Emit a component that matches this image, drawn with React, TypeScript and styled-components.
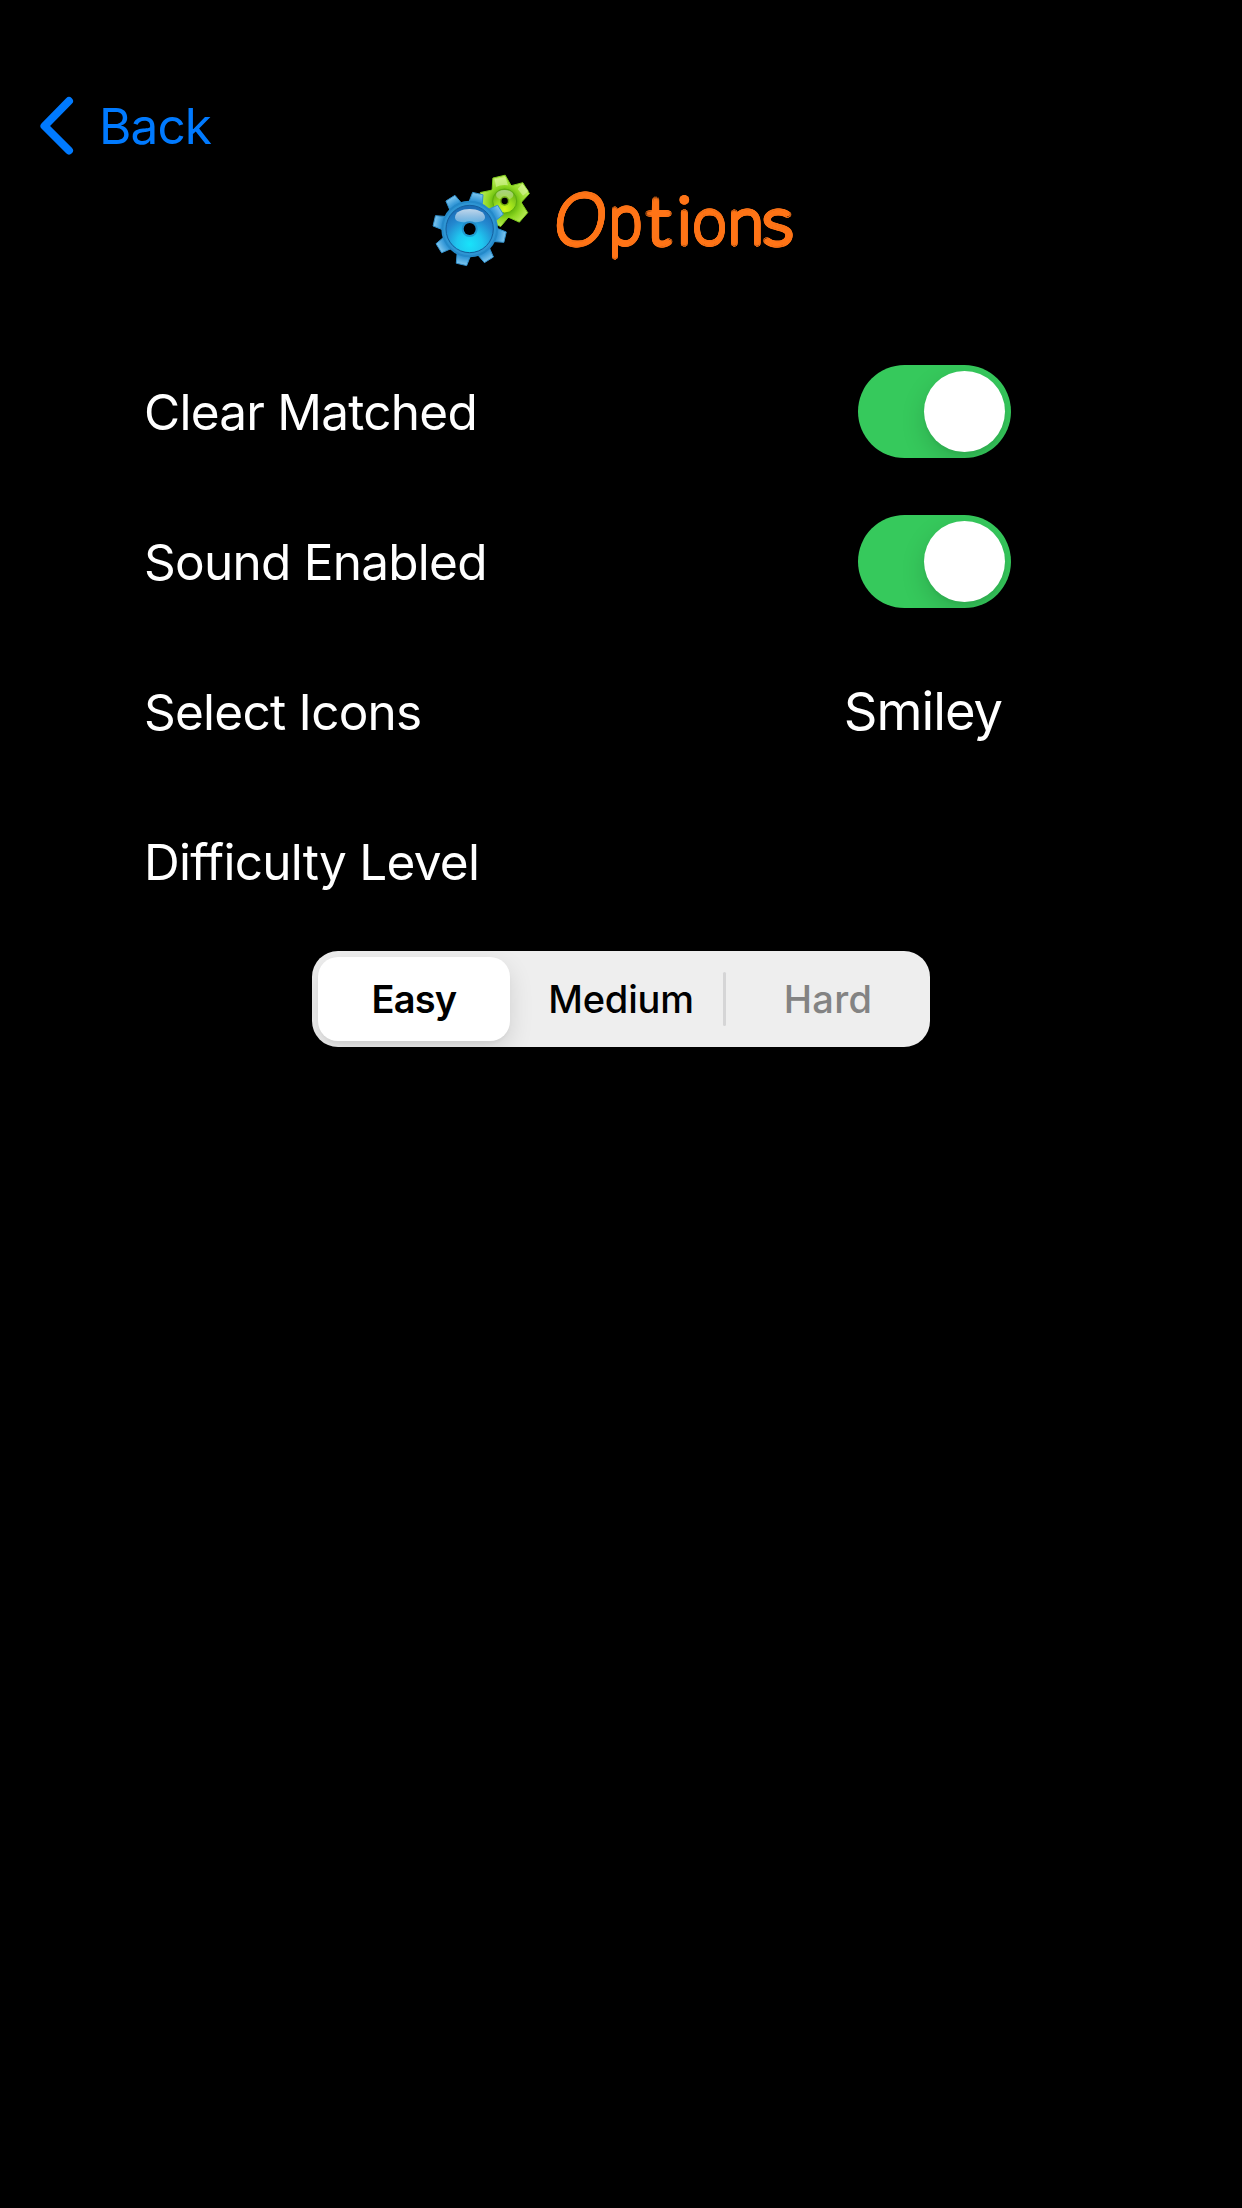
import React, { useState } from "react";
import styled, { createGlobalStyle } from "styled-components";

const GlobalStyle = createGlobalStyle`
  * { box-sizing: border-box; }
  body { margin: 0; background: #000; }
  button { border: 0; padding: 0; margin: 0; background: none; font: inherit; color: inherit; }
`;

const Screen = styled.main`
  display: flex;
  flex-direction: column;
  width: 100%;
  min-height: 2208px;
  padding-top: 81px;
  background: #000;
  color: #fff;
  font-family: Inter, "Liberation Sans", sans-serif;
`;

const NavBar = styled.nav`
  display: flex;
  height: 90px;
  padding-left: 38px;
`;

const BackButton = styled.button`
  display: flex;
  align-items: center;
  gap: 20px;
  color: #007aff;
  font-size: 49.5px;
  letter-spacing: -0.9px;
`;

const Header = styled.header`
  display: flex;
  align-items: flex-start;
  height: 166px;
  padding-left: 420px;
`;

const GearsIcon = styled.svg`
  flex: none;
  width: 120px;
  height: 110px;
  margin-top: -6px;
`;

/* Thickens a hairline face evenly, leaving round stroke ends. */
const roundPen = (radius: number, color: string) =>
  Array.from({ length: 20 }, (_, i) => {
    const a = (i * Math.PI) / 10;
    return `${(radius * Math.cos(a)).toFixed(2)}px ${(radius * Math.sin(a)).toFixed(2)}px 0 ${color}`;
  }).join(", ");

const Title = styled.h1`
  display: flex;
  margin: -4px 0 0 12px;
  color: #ff7518;
  font-family: Lato, sans-serif;
  font-size: 70px;
  font-weight: 100;
  line-height: 100px;
  text-shadow: ${roundPen(3, "#ff7518")}, ${roundPen(1.5, "#ff7518")};
`;

const Letter = styled.span<{ $width: number; $slant?: number; $stretch?: number; $rise?: number }>`
  width: ${(p) => p.$width}px;
  transform-origin: 0 76%;
  transform: skewX(${(p) => -(p.$slant ?? 0)}deg) scale(${(p) => p.$stretch ?? 1}, ${(p) => p.$rise ?? 1});
`;

const Settings = styled.section`
  display: flex;
  flex-direction: column;
  padding: 0 231px 0 144px;
`;

const Row = styled.div`
  display: flex;
  align-items: center;
  justify-content: space-between;
  height: 150px;
`;

const Label = styled.span`
  font-size: 49.5px;
  letter-spacing: -0.75px;
  white-space: nowrap;
`;

const Value = styled.button`
  padding: 0 9px 2px 0;
  font-size: 52.5px;
  letter-spacing: -1px;
`;

const Toggle = styled.button<{ $on: boolean }>`
  display: flex;
  justify-content: ${(p) => (p.$on ? "flex-end" : "flex-start")};
  width: 153px;
  height: 93px;
  padding: 6px;
  margin-bottom: 1px;
  border-radius: 47px;
  overflow: hidden;
  background: ${(p) => (p.$on ? "#36c95c" : "#39393d")};
`;

const Knob = styled.span`
  width: 81px;
  height: 81px;
  border-radius: 50%;
  background: #fff;
  box-shadow: 0 9px 24px rgba(0, 0, 0, 0.15), 0 3px 3px rgba(0, 0, 0, 0.04);
`;

const Segments = styled.div`
  display: flex;
  align-items: center;
  align-self: center;
  width: 618px;
  height: 96px;
  margin-top: 14px;
  padding: 6px;
  border-radius: 26px;
  overflow: hidden;
  background: #eee;
`;

const Segment = styled.button<{ $selected?: boolean; $disabled?: boolean; $tracking?: number }>`
  flex: 1;
  height: 84px;
  border-radius: 20px;
  font-size: 38px;
  font-weight: ${(p) => (p.$selected ? 600 : p.$disabled ? 450 : 500)};
  letter-spacing: ${(p) => p.$tracking ?? 0}px;
  color: ${(p) => (p.$disabled ? "#838383" : "#000")};
  background: ${(p) => (p.$selected ? "#fff" : "transparent")};
  box-shadow: ${(p) =>
    p.$selected ? "0 9px 24px rgba(0,0,0,0.12), 0 3px 3px rgba(0,0,0,0.03)" : "none"};
`;

const Divider = styled.span<{ $visible: boolean }>`
  width: 3px;
  height: 54px;
  margin: 0 6px;
  border-radius: 2px;
  background: ${(p) => (p.$visible ? "#d5d5d6" : "transparent")};
`;

function gearTeeth(cx: number, cy: number, inner: number, outer: number, base: number, tip: number, start: number, count: number) {
  const point = (radius: number, half: number, deg: number) => {
    const a = (deg * Math.PI) / 180;
    return `${(cx + radius * Math.cos(a) - half * Math.sin(a)).toFixed(1)} ${(cy + radius * Math.sin(a) + half * Math.cos(a)).toFixed(1)}`;
  };
  return Array.from({ length: count }, (_, i) => {
    const deg = start + (i * 360) / count;
    return `M${point(inner, -base, deg)}L${point(outer, -tip, deg)}L${point(outer, tip, deg)}L${point(inner, base, deg)}Z`;
  }).join("");
}

function Gears() {
  return (
    <GearsIcon viewBox="0 0 360 330" aria-hidden="true">
      <defs>
        <radialGradient id="greenBody" gradientUnits="userSpaceOnUse" cx="254" cy="112" r="84">
          <stop offset="0.4" stopColor="#68b90d" />
          <stop offset="0.6" stopColor="#8fd823" />
          <stop offset="1" stopColor="#c9f26c" />
        </radialGradient>
        <radialGradient id="greenDisc" cx="0.5" cy="0.85" r="0.8">
          <stop offset="0" stopColor="#d2fa1c" />
          <stop offset="0.5" stopColor="#98dc1c" />
          <stop offset="1" stopColor="#62ac14" />
        </radialGradient>
        <radialGradient id="blueBody" gradientUnits="userSpaceOnUse" cx="149" cy="192" r="114">
          <stop offset="0.68" stopColor="#2186c9" />
          <stop offset="0.78" stopColor="#3a9cda" />
          <stop offset="1" stopColor="#8fd0f4" />
        </radialGradient>
        <radialGradient id="blueDisc" cx="0.5" cy="0.82" r="0.78">
          <stop offset="0" stopColor="#18e3fa" />
          <stop offset="0.35" stopColor="#1fc6ef" />
          <stop offset="0.7" stopColor="#2389d0" />
          <stop offset="1" stopColor="#1b6db8" />
        </radialGradient>
        <linearGradient id="gloss" x1="0" y1="0" x2="0" y2="1">
          <stop offset="0" stopColor="#fff" stopOpacity="0.72" />
          <stop offset="1" stopColor="#fff" stopOpacity="0.3" />
        </linearGradient>
      </defs>
      <g strokeLinejoin="round">
        <path d={gearTeeth(254, 108, 38, 75, 30, 19, 257, 5)} fill="url(#greenBody)" stroke="#7ecb1c" strokeWidth="3" />
        <circle cx="254" cy="108" r="51" fill="url(#greenBody)" />
        <path d="M224 42L256 37L264 61Q244 58 228 66ZM307 57L326 77L309 92L293 72Z" fill="#e2f9ac" opacity="0.55" />
        <circle cx="254" cy="108" r="36" fill="url(#greenDisc)" stroke="#5dac0d" strokeWidth="3" />
        <ellipse cx="254" cy="90" rx="26" ry="15" fill="url(#gloss)" opacity="0.65" />
        <circle cx="254" cy="108" r="14" fill="#619d08" opacity="0.8" />
        <circle cx="254" cy="108" r="9.5" fill="#000" />
      </g>
      <g strokeLinejoin="round">
        <path d={gearTeeth(149, 192, 74, 109, 21, 16, 13, 8)} fill="url(#blueBody)" stroke="#3190cc" strokeWidth="3" />
        <circle cx="149" cy="192" r="85" fill="#2489c9" />
        <circle cx="149" cy="192" r="79" fill="#2e95d3" />
        <circle cx="149" cy="192" r="71" fill="url(#blueDisc)" stroke="#145f9d" strokeWidth="3" />
        <path d="M105 157C105 141 126 132 149 132S195 141 195 157C195 171 177 172 149 172S105 171 105 157Z" fill="url(#gloss)" />
        <circle cx="149" cy="192" r="24" fill="#1e7fbd" opacity="0.6" />
        <circle cx="149" cy="192" r="18" fill="#000" />
      </g>
    </GearsIcon>
  );
}

export default function App() {
  const [clearMatched, setClearMatched] = useState(true);
  const [soundEnabled, setSoundEnabled] = useState(true);

  return (
    <Screen>
      <GlobalStyle />
      <NavBar>
        <BackButton>
          <svg width="41" height="62" viewBox="0 0 41 62" fill="none" aria-hidden="true">
            <path d="M31 6L6.5 31L31 55.5" stroke="currentColor" strokeWidth="8" strokeLinecap="round" strokeLinejoin="round" />
          </svg>
          Back
        </BackButton>
      </NavBar>
      <Header>
        <Gears />
        <Title>
          <Letter $width={57} $slant={9} $stretch={0.92}>O</Letter>
          <Letter $width={37} $stretch={0.86} $rise={1.02}>p</Letter>
          <Letter $width={31} $stretch={1.08} $rise={0.93}>t</Letter>
          <Letter $width={16} $rise={0.93}>i</Letter>
          <Letter $width={35} $stretch={0.86} $rise={0.93}>o</Letter>
          <Letter $width={34} $stretch={0.93} $rise={0.93}>n</Letter>
          <Letter $width={32} $stretch={1.08} $rise={0.93}>s</Letter>
        </Title>
      </Header>
      <Settings>
        <Row>
          <Label>Clear Matched</Label>
          <Toggle $on={clearMatched} onClick={() => setClearMatched(!clearMatched)} aria-label="Clear Matched"><Knob /></Toggle>
        </Row>
        <Row>
          <Label>Sound Enabled</Label>
          <Toggle $on={soundEnabled} onClick={() => setSoundEnabled(!soundEnabled)} aria-label="Sound Enabled"><Knob /></Toggle>
        </Row>
        <Row>
          <Label>Select Icons</Label>
          <Value>Smiley</Value>
        </Row>
        <Row>
          <Label>Difficulty Level</Label>
        </Row>
      </Settings>
      <Segments>
        <Segment $selected $tracking={-0.8}>Easy</Segment>
        <Divider $visible={false} />
        <Segment $tracking={-0.2}>Medium</Segment>
        <Divider $visible />
        <Segment $disabled $tracking={0.3}>Hard</Segment>
      </Segments>
    </Screen>
  );
}
